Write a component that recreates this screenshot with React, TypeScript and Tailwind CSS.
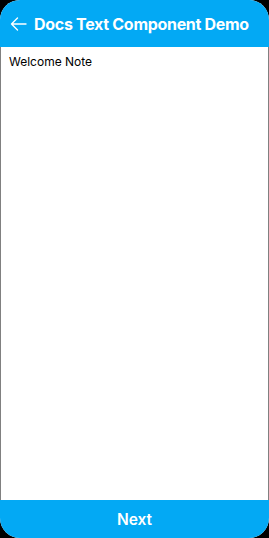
import React from "react";

export default function App() {
  return (
    <div className="w-[269px] h-[538px] bg-black" style={{ fontFamily: "Inter, 'Noto Sans', sans-serif" }}>
      <div className="w-full h-full rounded-[20px] overflow-hidden bg-white flex flex-col">
        <div className="h-[47px] bg-[#03a9f4] flex items-center pl-[10px] pr-2 gap-[7px] shrink-0">
          <svg width="17" height="14" viewBox="0 0 17 14" fill="none" stroke="white" strokeWidth="1.4" strokeLinecap="round" strokeLinejoin="round">
            <path d="M16 7H1.5M7.5 1L1.5 7l6 6" />
          </svg>
          <span className="text-white font-bold text-[16px] tracking-[-0.3px] whitespace-nowrap">Docs Text Component Demo</span>
        </div>
        <div className="flex-1 border-x border-[#808080] px-[8px] pt-[7px]">
          <p className="text-[12px] text-black leading-[16px]">Welcome Note</p>
        </div>
        <div className="h-[38px] bg-[#03a9f4] flex items-center justify-center pt-[2px] shrink-0">
          <span className="text-white font-semibold text-[15.5px]">Next</span>
        </div>
      </div>
    </div>
  );
}
